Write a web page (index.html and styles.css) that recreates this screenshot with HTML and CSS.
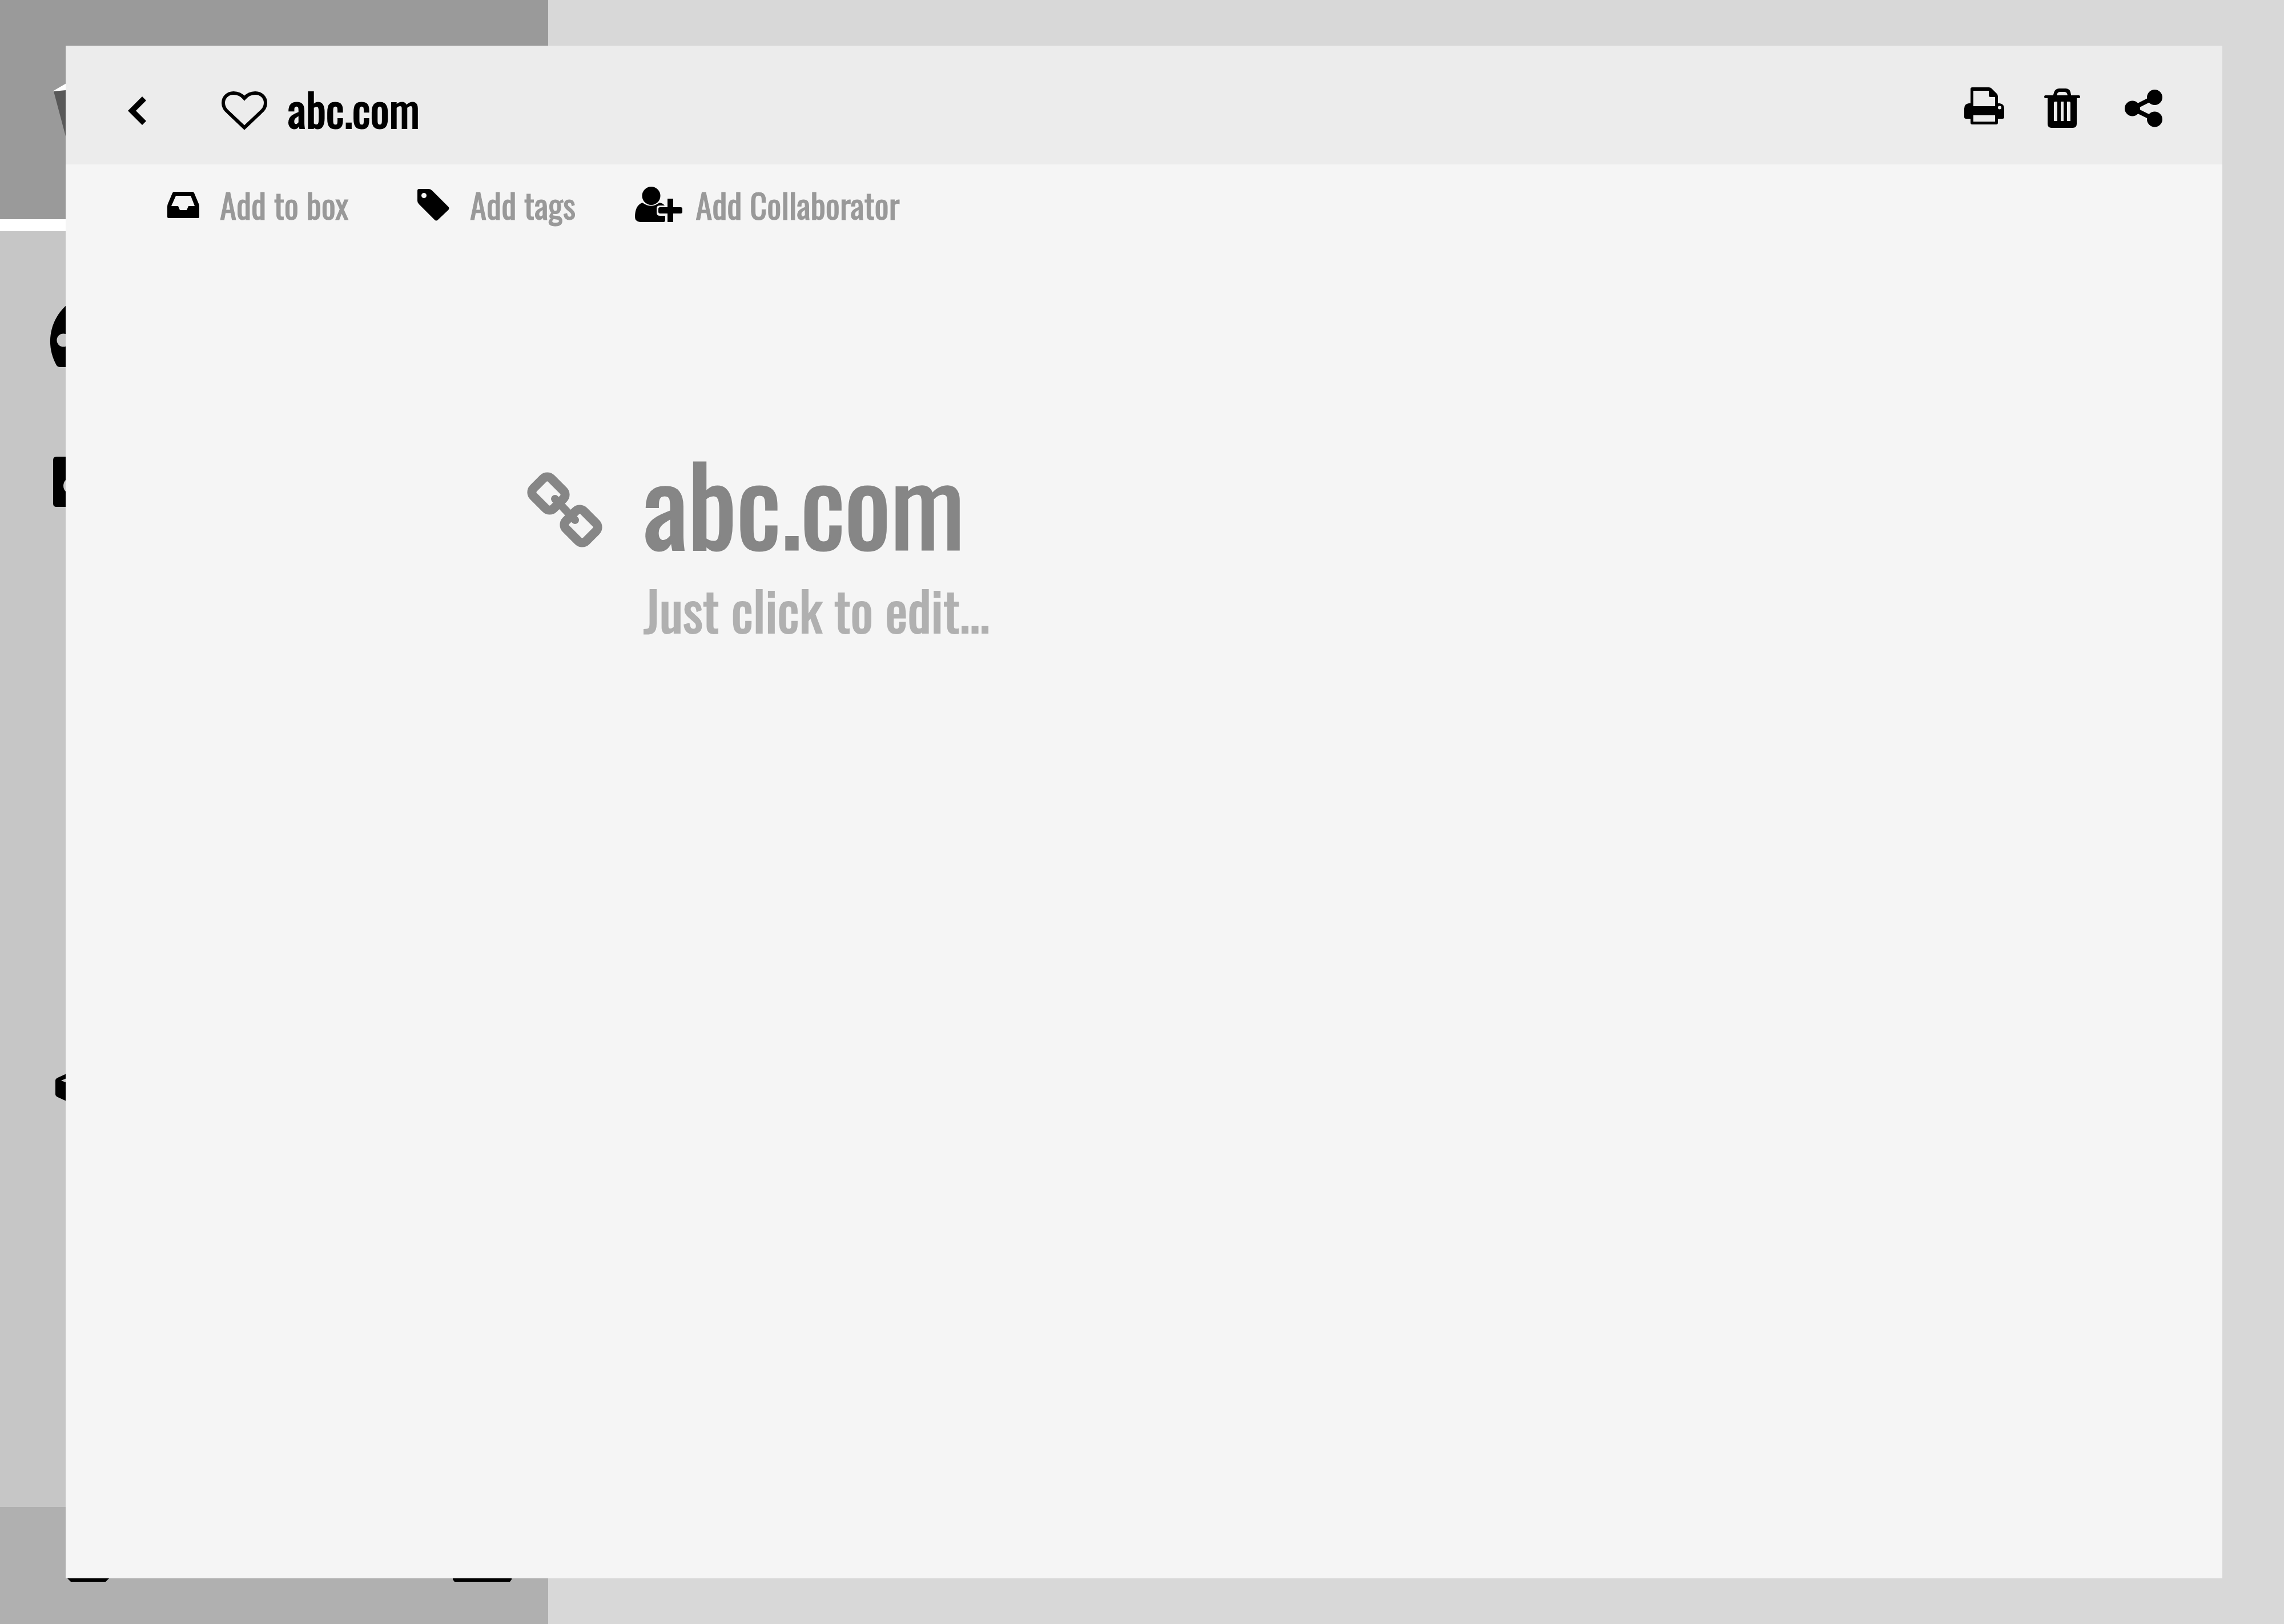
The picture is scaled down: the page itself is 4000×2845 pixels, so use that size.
FILE: index.html
```html
<!DOCTYPE html>
<html lang="en">
<head>
<meta charset="utf-8">
<meta name="viewport" content="width=device-width, initial-scale=1">
<title>abc.com</title>
<link rel="stylesheet" href="styles.css">
</head>
<body>
<div class="app">
  <aside class="sidebar">
    <div class="brand">
      <svg width="240" height="210" viewBox="0 -30 240 210" aria-hidden="true">
        <path fill="#fff" d="M0 40L120-30L240 40L120 34Z"/>
        <path fill="#585858" d="M2 40L23 38H217L238 40L206 160H34Z"/>
      </svg>
    </div>
    <nav class="nav" aria-label="Main">
      <a class="nav-link nav-dashboard" href="#dashboard" aria-label="Dashboard">
        <svg width="170" height="130" viewBox="0 0 170 130" aria-hidden="true">
          <path fill-rule="evenodd" d="M85 0A85 85 0 0 0 12 127Q14 130 18 130H152Q156 130 158 127A85 85 0 0 0 85 0ZM24 71.500A11.500 11.500 0 1 1 24 94.500A11.500 11.500 0 1 1 24 71.500ZM146 71.500A11.500 11.500 0 1 1 146 94.500A11.500 11.500 0 1 1 146 71.500Z"/>
        </svg>
      </a>
      <a class="nav-link nav-photos" href="#photos" aria-label="Photos">
        <svg width="126" height="88" viewBox="0 0 126 88" aria-hidden="true">
          <path fill-rule="evenodd" d="M6 0H120Q126 0 126 6V82Q126 88 120 88H6Q0 88 0 82V6Q0 0 6 0ZM33 36A15 15 0 1 0 33 66A15 15 0 1 0 33 36Z"/>
        </svg>
      </a>
      <a class="nav-link nav-boxes" href="#boxes" aria-label="Boxes">
        <svg width="100" height="78" viewBox="0 -8 100 78" aria-hidden="true">
          <path fill-rule="evenodd" d="M50-7L96 14Q100 16 100 19V43Q100 46 96 48L50 69L4 48Q0 46 0 43V19Q0 16 4 14ZM10 19L50 34L90 19L50 2Z"/>
        </svg>
      </a>
    </nav>
    <div class="sidebar-footer">
      <button class="icon-button" type="button" aria-label="Delete">
        <svg width="73" height="90" viewBox="0 0 73 90" aria-hidden="true"><path d="M0 0H73V84L67 90H6L0 84Z"/></svg>
      </button>
      <button class="icon-button" type="button" aria-label="Messages">
        <svg width="103" height="89" viewBox="0 0 103 89" aria-hidden="true"><path d="M0 0H103V85L100 89H3L0 85Z"/></svg>
      </button>
    </div>
  </aside>

  <main class="panel">
    <header class="panel-header">
      <button class="icon-button back" type="button" aria-label="Back">
        <svg width="32" height="50" viewBox="0 0 32 50" aria-hidden="true"><path d="M25 0L32 7L14 25L32 43L25 50L0 25Z"/></svg>
      </button>
      <button class="icon-button favourite" type="button" aria-label="Favourite">
        <svg width="80" height="68" viewBox="0 0 80 68" aria-hidden="true"><path fill="none" stroke="#000" stroke-width="6" d="M40 12C35 6 29 3 21 3C10 3 3 11 3 20.500C3 28 7 33 12 37L40 63.500L68 37C73 33 77 28 77 20.500C77 11 70 3 59 3C51 3 45 6 40 12Z"/></svg>
      </button>
      <span class="panel-title">abc.com</span>
      <div class="tools">
        <button class="icon-button" type="button" aria-label="Print">
          <svg width="70" height="74" viewBox="0 0 70 74" aria-hidden="true"><path fill-rule="evenodd" d="M14 0H43Q46 0 48 2L57 11Q59 13 59 16V28H62Q70 29 70 37V52Q70 55 67 55H59V62Q59 65 56 65H14Q11 65 11 62V55H3Q0 55 0 52V37Q0 29 8 28H11V3Q11 0 14 0ZM16 6V33H54V17H46Q43 17 43 14V6ZM16 49V60H54V49ZM62 32.500A3 3 0 1 0 62 38.500A3 3 0 1 0 62 32.500Z"/></svg>
        </button>
        <button class="icon-button" type="button" aria-label="Delete">
          <svg width="64" height="70" viewBox="0 0 64 70" aria-hidden="true"><path fill-rule="evenodd" d="M16 12V11Q18 0 26 0H38Q46 0 47 11V12H61Q63 12 63 14.500Q63 17 61 17H57V62Q57 69 50 69H13Q6 69 6 62V17H2Q0 17 0 14.500Q0 12 2 12ZM22 12H41Q40 6 36 6H27Q23 6 22 12ZM17 25V57H23V23H19Q17 23 17 25ZM29 23V57H34V23ZM40 23V57H46V25Q46 23 44 23Z"/></svg>
        </button>
        <button class="icon-button share" type="button" aria-label="Share">
          <svg width="66" height="66" viewBox="0 0 66 66" aria-hidden="true"><path fill="none" stroke="#000" stroke-width="8" d="M52 13.500L13.500 33L52 52"/><circle cx="13.500" cy="33" r="13.500"/><circle cx="52.500" cy="13.500" r="13.500"/><circle cx="52.500" cy="52" r="13.500"/></svg>
        </button>
      </div>
    </header>

    <div class="meta">
      <button class="meta-item add-box" type="button">
        <svg width="56" height="46" viewBox="0 0 56 46" aria-hidden="true"><path fill-rule="evenodd" d="M12 0H44Q46 0 47 2L55 21Q56 23 56 26V44Q56 46 54 46H2Q0 46 0 44V26Q0 23 1 21L9 2Q10 0 12 0ZM15 7L7 25H19L22 32H34L37 25H48L41 7Z"/></svg>
        <span>Add to box</span>
      </button>
      <button class="meta-item add-tags" type="button">
        <svg width="56" height="56" viewBox="0 0 56 56" aria-hidden="true"><path fill-rule="evenodd" d="M3 0H20Q23 0 26 3L54 31Q57 34 54 37L36 54Q33 57 30 54L3 27Q0 24 0 21V3Q0 0 3 0ZM11.500 7A4.500 4.500 0 1 0 11.500 16A4.500 4.500 0 1 0 11.500 7Z"/></svg>
        <span>Add tags</span>
      </button>
      <button class="meta-item add-person" type="button">
        <svg width="84" height="64" viewBox="0 0 84 64" aria-hidden="true"><circle cx="28.500" cy="16" r="16"/><path d="M13 28Q28 39 43 28Q49 29 52 33H44Q38 33 38 38V46Q38 51 44 51H53V60Q52 62 50 62H9Q0 61 0 53Q0 33 13 28Z"/><path d="M57 21H67V36H80Q83 36 83 39V44Q83 47 80 47H67V62H57V47H44Q41 47 41 44V39Q41 36 44 36H57Z"/></svg>
        <span>Add Collaborator</span>
      </button>
    </div>

    <section class="note">
      <svg class="note-icon" width="132" height="132" viewBox="0 0 132 132" aria-hidden="true">
        <g fill="none" stroke="#868686" stroke-width="16">
          <rect x="-25" y="-22" width="50" height="44" rx="10" transform="translate(37.500 37.500) rotate(45)"/>
          <rect x="-25" y="-22" width="50" height="44" rx="10" transform="translate(94.500 94.500) rotate(45)"/>
          <path stroke-width="14" stroke-linecap="round" d="M49 47L84 84"/>
        </g>
      </svg>
      <div class="note-text">
        <h1 class="note-title">abc.com</h1>
        <input class="note-body" type="text" aria-label="Note text" placeholder="Just click to edit...">
      </div>
    </section>
  </main>
</div>
</body>
</html>
```
FILE: styles.css
```css
* {
  box-sizing: border-box;
}

body {
  margin: 0;
  font-family: Oswald, "Roboto Condensed", sans-serif;
  color: #000;
  background: #d8d8d8;
}

svg {
  display: block;
  flex: none;
}

button,
input {
  margin: 0;
  padding: 0;
  border: 0;
  background: none;
  color: inherit;
  font: inherit;
}

button {
  cursor: pointer;
}

.app {
  position: relative;
  display: flex;
  min-height: 100vh;
}

/* Sidebar behind the open panel */
.sidebar {
  display: flex;
  flex-direction: column;
  width: 24%;
}

.brand {
  height: 384px;
  padding: 90px 92px 0;
  background: #9a9a9a;
}

.nav {
  display: flex;
  flex: 1;
  flex-direction: column;
  align-items: flex-start;
  padding: 108px 87px 0;
  border-top: 21px solid #fff;
  background: #c6c6c6;
}

.nav-link {
  color: inherit;
}

.nav-photos {
  margin: 157px 0 0 6px;
}

.nav-boxes {
  margin: 978px 0 0 10px;
}

.sidebar-footer {
  display: flex;
  align-items: flex-end;
  justify-content: space-between;
  height: 205px;
  padding: 0 64px 74px 118px;
  background: #b0b0b0;
}

/* Panel lying over the app */
.panel {
  position: absolute;
  inset: 80px 108px 80px 115px;
  background: #f5f5f5;
  -webkit-text-stroke: 1px;
}

.panel-header {
  display: flex;
  align-items: center;
  height: 208px;
  padding: 12px 105px 0 109px;
  background: #ececec;
}

.back {
  padding-top: 8px;
}

.favourite {
  margin-left: 132px;
  padding-top: 8px;
}

.panel-title {
  margin-left: 36px;
  font-size: 78px;
  line-height: 120px;
  -webkit-text-stroke: 2px;
}

.tools {
  display: flex;
  align-items: center;
  gap: 70px;
  margin-left: auto;
}

.share {
  margin-left: 7px;
}

.meta {
  display: flex;
  align-items: center;
  height: 142px;
  padding-left: 178px;
}

.meta-item {
  display: flex;
  align-items: center;
  font-size: 59px;
  line-height: 88px;
}

.meta-item span {
  color: #999;
}

.add-box,
.add-tags {
  gap: 36px;
}

.add-tags {
  margin-left: 121px;
}

.add-person {
  gap: 22px;
  margin-left: 104px;
}

.note {
  display: flex;
  align-items: flex-start;
  gap: 72px;
  padding: 337px 400px 0 808px;
}

.note-icon {
  margin-top: 60px;
}

.note-text {
  flex: 1;
}

.note-title {
  margin: 0;
  color: #868686;
  font-size: 190px;
  font-weight: 400;
  line-height: 220px;
  -webkit-text-stroke: 3px;
}

.note-body {
  display: block;
  width: 100%;
  height: 160px;
  font-size: 93px;
  line-height: 160px;
  -webkit-text-stroke: 2px;
}

.note-body::placeholder {
  color: #b0b0b0;
  opacity: 1;
}
```
